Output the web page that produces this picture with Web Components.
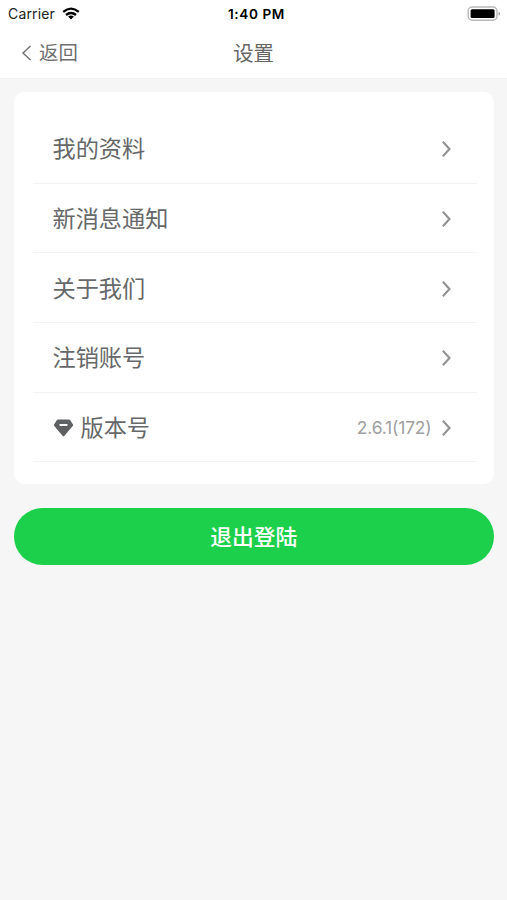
<!DOCTYPE html>
<html lang="zh-CN">
<head>
<meta charset="utf-8">
<title>设置</title>
<style>
html,body{margin:0;height:100%}
body{background:#f6f6f6;font-family:Inter,"Noto Sans CJK SC",sans-serif;overflow:hidden}
</style>
</head>
<body>
<settings-page></settings-page>
<script>
const define=(name,html)=>customElements.define(name,class extends HTMLElement{
  constructor(){
    super();
    const t=document.createElement('template');
    t.innerHTML=html;
    this.attachShadow({mode:'open'}).append(t.content.cloneNode(true));
  }
});

define('status-bar',`<style>
:host{display:grid;grid-template-columns:1fr auto 1fr;align-items:center;height:27px;background:#fff;padding:0 7px 0 8px;color:#222}
.left{display:flex;align-items:center;gap:7px;font-size:14px;letter-spacing:.15px;line-height:27px}
.time{font-size:13.6px;font-weight:600;letter-spacing:.6px;color:#000;padding-left:5px}
.bat{justify-self:end}
svg{display:block}
</style>
<div class="left"><span>Carrier</span>
<svg width="18" height="13" viewBox="0 0 18 13" fill="none" stroke="#000" stroke-width="2.3"><path d="M1.2 4.9Q9-1.6 16.8 4.9M4 8Q9 3.9 14 8"/><path d="M9 12.4L6.1 9.6Q9 7.4 11.9 9.6Z" fill="#000" stroke="none"/></svg></div>
<span class="time">1:40 PM</span>
<svg class="bat" width="33" height="16" viewBox="0 0 33 16"><rect x="1.2" y="1" width="28.8" height="13.2" rx="4" fill="#fff" stroke="#b9b9b9" stroke-width="1.4"/><rect x="3.6" y="3.2" width="24" height="8.8" rx="1.5" fill="#000"/><path d="M31.6 5.8q1.4.4 1.4 2t-1.4 2z" fill="#999"/></svg>`);

define('nav-bar',`<style>
:host{display:grid;grid-template-columns:1fr auto 1fr;align-items:center;height:52px;background:#fff;border-bottom:1px solid #f1f1f1;box-sizing:border-box;padding:0 21px;color:#707070}
.back{display:flex;align-items:center;gap:7px;font-size:19.4px;line-height:28px}
.title{font-size:20.3px;line-height:28px;color:#666;padding-top:2px}
svg{display:block}
</style>
<div class="back"><svg width="11" height="16" viewBox="0 0 11 16" fill="none" stroke="#747474" stroke-width="1.5"><path d="M9.5 1L2 8l7.5 7"/></svg><slot name="back"></slot></div>
<div class="title"><slot></slot></div>`);

define('settings-card',`<style>
:host{display:block;box-sizing:border-box;height:392px;background:#fff;border-radius:10px;padding:22px 16.5px 0 19px}
</style><slot></slot>`);

define('settings-row',`<style>
:host{display:flex;align-items:center;box-sizing:border-box;height:69.7px;border-bottom:1px solid #f3f3f3;padding:2px 25.5px 0 19.5px;font-size:23.2px;line-height:34px;color:#666869}
.value{margin-left:auto;font-size:17.5px;letter-spacing:-.2px;color:#a0a0a0}
.arrow{display:block;margin-left:9px}
::slotted(svg){display:block;margin-right:7px}
</style><slot name="icon"></slot><span><slot></slot></span><span class="value"><slot name="value"></slot></span>
<svg class="arrow" width="11" height="18" viewBox="0 0 11 18" fill="none" stroke="#929292" stroke-width="2.1"><path d="M1.9 1.7L8.5 9l-6.6 7.3"/></svg>`);

define('action-button',`<style>
:host{display:flex;align-items:center;justify-content:center;height:57px;border-radius:29px;background:#1dd04c;color:#fff;font-size:21.8px;font-weight:500;line-height:32px}
span{padding-top:1px}
</style><span><slot></slot></span>`);

define('settings-page',`<style>
:host{display:block;height:100%}
main{display:flex;flex-direction:column;gap:24px;padding:13px 13.5px 0 14px}
</style>
<status-bar></status-bar>
<nav-bar><span slot="back">返回</span>设置</nav-bar>
<main>
<settings-card>
<settings-row>我的资料</settings-row>
<settings-row>新消息通知</settings-row>
<settings-row>关于我们</settings-row>
<settings-row>注销账号</settings-row>
<settings-row><svg slot="icon" width="21" height="19" viewBox="0 0 21 19"><path d="M5.2 .5h10.6q.7 0 1.2.6l3 4.3q.5.7-.1 1.4l-8.6 10.2q-.8.9-1.600 0L1.100 6.800Q.5 6.100 1 5.400l3-4.300Q4.500 .5 5.200 .5z" fill="#5f6163"/><path d="M7.300 6h6.400" stroke="#fff" stroke-width="1.900" stroke-linecap="round"/></svg>版本号<span slot="value">2.6.1(172)</span></settings-row>
</settings-card>
<action-button>退出登陆</action-button>
</main>`);
</script>
</body>
</html>
